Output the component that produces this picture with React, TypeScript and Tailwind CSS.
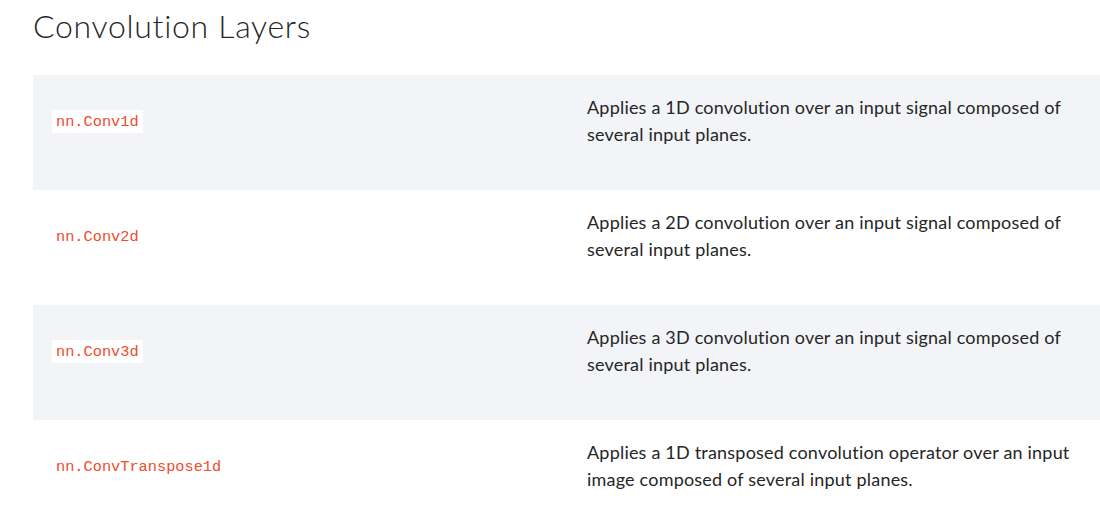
const rows = [
  {
    name: 'nn.Conv1d',
    desc: 'Applies a 1D convolution over an input signal composed of several input planes.',
  },
  {
    name: 'nn.Conv2d',
    desc: 'Applies a 2D convolution over an input signal composed of several input planes.',
  },
  {
    name: 'nn.Conv3d',
    desc: 'Applies a 3D convolution over an input signal composed of several input planes.',
  },
  {
    name: 'nn.ConvTranspose1d',
    desc: 'Applies a 1D transposed convolution operator over an input image composed of several input planes.',
  },
];

export default function App() {
  return (
    <div className="w-[1100px] h-[506px] overflow-hidden bg-white text-[#262626] font-['Lato',sans-serif]">
      <h2 className="pl-[33px] pt-[6px] h-[75px] text-[32px] font-light tracking-[0.7px] leading-[40px]">
        Convolution Layers
      </h2>

      <div className="ml-[33px] flex flex-col">
        {rows.map((r, i) => (
          <div
            key={r.name}
            className={`flex items-center h-[115px] pb-[22px] ${i % 2 === 0 ? 'bg-[#f3f4f7]' : 'bg-white'}`}
          >
            <div className="w-[554px] pl-[19px] flex">
              <code className="block bg-white px-[4px] py-[2.5px] text-[15.3px] leading-[18px] text-[#ee4c2c] font-['Liberation_Mono',monospace]">
                {r.name}
              </code>
            </div>
            <p className="flex-1 pr-[14px] mb-[2px] text-[18px] tracking-[0.2px] leading-[27px]">{r.desc}</p>
          </div>
        ))}
      </div>
    </div>
  );
}
